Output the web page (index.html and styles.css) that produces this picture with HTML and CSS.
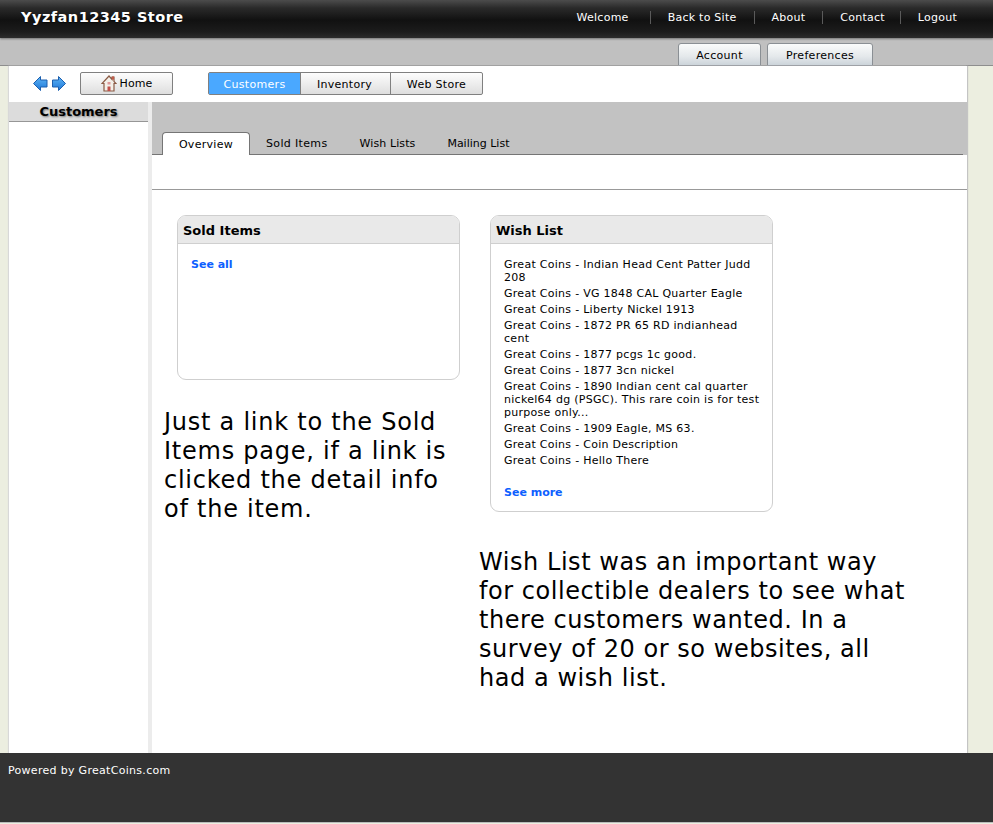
FILE: index.html
```html
<!DOCTYPE html>
<html lang="en">
<head>
<meta charset="utf-8">
<title>Yyzfan12345 Store</title>
<link rel="stylesheet" href="styles.css">
</head>
<body>
<header class="topbar">
  <div class="brand">Yyzfan12345 Store</div>
  <nav class="toplinks">
    <a class="toplink">Welcome</a>
    <a class="toplink">Back to Site</a>
    <a class="toplink">About</a>
    <a class="toplink toplink-contact">Contact</a>
    <a class="toplink">Logout</a>
  </nav>
</header>
<div class="subbar">
  <a class="subtab subtab-account">Account</a>
  <a class="subtab subtab-prefs">Preferences</a>
</div>
<div class="shell">
  <div class="toolbar">
    <div class="arrows">
      <svg class="arrow" width="15" height="15" viewBox="0 0 15 15"><defs><linearGradient id="arrowfill" x1="0" y1="0" x2="0" y2="1"><stop offset="0" stop-color="#5db4f5"/><stop offset="1" stop-color="#1f78d8"/></linearGradient></defs><path d="M0.5 7.5 7.5 0.5V4H14V11H7.5V14.5Z" fill="url(#arrowfill)" stroke="#1c5fae"/></svg>
      <svg class="arrow" width="14" height="15" viewBox="0 0 14 15"><path d="M13.5 7.5 6.5 0.5V4H0.5V11H6.5V14.5Z" fill="url(#arrowfill)" stroke="#1c5fae"/></svg>
    </div>
    <button class="home-btn">
      <svg width="16" height="17" viewBox="0 0 16 17"><path d="M8 1 1 8.5H3V16H13V8.500H15L13 6.500V2H11V4.500Z" fill="#f3efe8" stroke="#8a5a44" stroke-width="1.200"/><rect x="11" y="1.500" width="2" height="3" fill="#c25a4a"/><rect x="6.500" y="7" width="3" height="2.500" fill="#d99"/><rect x="6.500" y="11.500" width="3" height="4.500" fill="#c2504a"/></svg>
      <span>Home</span>
    </button>
    <div class="segments">
      <a class="segment segment-active">Customers</a>
      <a class="segment segment-inv">Inventory</a>
      <a class="segment segment-web">Web Store</a>
    </div>
  </div>
  <div class="columns">
    <aside class="sidebar">
      <h2 class="sidebar-title">Customers</h2>
    </aside>
    <main class="content">
      <div class="tabband">
        <div class="tabrow">
          <a class="tab tab-active">Overview</a>
          <a class="tab tab-sold">Sold Items</a>
          <a class="tab tab-wish">Wish Lists</a>
          <a class="tab tab-mail">Mailing List</a>
        </div>
      </div>
      <div class="rule-row"></div>
      <div class="panels">
        <section class="panel-col panel-col-left">
          <div class="card card-sold">
            <h3 class="card-title">Sold Items</h3>
            <div class="card-body"><a class="more">See all</a></div>
          </div>
          <p class="note note-left">Just a link to the Sold Items page, if a link is clicked the detail info of the item.</p>
        </section>
        <section class="panel-col panel-col-right">
          <div class="card">
            <h3 class="card-title">Wish List</h3>
            <div class="card-body card-body-list">
              <ul class="items">
                <li>Great Coins - Indian Head Cent Patter Judd 208</li>
                <li>Great Coins - VG 1848 CAL Quarter Eagle</li>
                <li>Great Coins - Liberty Nickel 1913</li>
                <li>Great Coins - 1872 PR 65 RD indianhead cent</li>
                <li>Great Coins - 1877 pcgs 1c good.</li>
                <li>Great Coins - 1877 3cn nickel</li>
                <li>Great Coins - 1890 Indian cent cal quarter nickel64 dg (PSGC). This rare coin is for test purpose only...</li>
                <li>Great Coins - 1909 Eagle, MS 63.</li>
                <li>Great Coins - Coin Description</li>
                <li>Great Coins - Hello There</li>
              </ul>
              <a class="more">See more</a>
            </div>
          </div>
          <p class="note note-right">Wish List was an important way for collectible dealers to see what there customers wanted. In a survey of 20 or so websites, all had a wish list.</p>
        </section>
      </div>
    </main>
  </div>
</div>
<footer class="footer">Powered by GreatCoins.com</footer>
</body>
</html>
```

FILE: styles.css
```css
* { box-sizing: border-box; }
html, body { height: 100%; }
body {
  margin: 0;
  height: 824px;
  overflow: hidden;
  background: #eceee0;
  font-family: "DejaVu Sans", Verdana, sans-serif;
  font-size: 11px;
  color: #000;
  display: flex;
  flex-direction: column;
}
.topbar {
  height: 38px;
  flex: none;
  display: flex;
  justify-content: space-between;
  align-items: center;
  background: linear-gradient(#4c4c4c 0, #2a2a2a 8px, #111 20px, #1c1c1c 32px, #2c2c2c 38px);
  box-shadow: 0 1px 2px rgba(0,0,0,.4);
  position: relative;
  z-index: 1;
}
.brand {
  margin-left: 21px;
  margin-top: -5px;
  font-size: 14.500px;
  letter-spacing: .47px;
  font-weight: bold;
  color: #fff;
  text-shadow: 0 1px 1px rgba(0,0,0,.6);
}
.toplinks { display: flex; margin-right: 19px; margin-top: -4px; }
.toplink {
  color: #fff;
  font-size: 11px;
  letter-spacing: .25px;
  line-height: 13px;
  padding: 0 17px;
  border-left: 1px solid #5a5a5a;
}
.toplink:first-child { border-left: 0; padding-right: 21px; }
.toplink-contact { padding-right: 15px; }
.subbar {
  height: 28px;
  flex: none;
  background: #c0c0c0;
  border-bottom: 1px solid #8e8e8e;
  display: flex;
  align-items: flex-end;
  padding-left: 678px;
  gap: 6px;
}
.subtab {
  height: 23px;
  margin-bottom: -1px;
  border: 1px solid #8a8f94;
  border-radius: 3px 3px 0 0;
  background: linear-gradient(#fafbfb, #e4e8eb 60%, #ccd4da);
  text-align: center;
  line-height: 24px;
  font-size: 11px;
  letter-spacing: .3px;
}
.subtab-account { width: 83px; }
.subtab-prefs { width: 106px; }
.shell {
  flex: none;
  margin-left: 9px;
  width: 958px;
  height: 687px;
  background: #fff;
  box-shadow: 1px 0 1px #c4c4c4, -1px 0 1px #d8d8d8;
  display: flex;
  flex-direction: column;
}
.toolbar {
  height: 36px;
  flex: none;
  display: flex;
  align-items: center;
  padding-bottom: 1px;
}
.arrows { display: flex; gap: 4px; margin-left: 24px; width: 47px; }
.arrow { display: block; }
.home-btn {
  width: 93px;
  height: 23px;
  padding: 0;
  border: 1px solid #808080;
  border-radius: 2px;
  background: linear-gradient(#fdfdfd, #dedede);
  display: flex;
  align-items: center;
  justify-content: center;
  gap: 3px;
  font: 11px "DejaVu Sans", Verdana, sans-serif;
  letter-spacing: .1px;
  color: #000;
}
.segments {
  display: flex;
  margin-left: 35px;
  height: 23px;
  border: 1px solid #808080;
  border-radius: 2px;
  background: linear-gradient(#fdfdfd, #dedede);
}
.segment { line-height: 24px; text-align: center; font-size: 11px; letter-spacing: .3px; }
.segment-active { width: 91px; background: #4aa8ff; color: #fff; }
.segment-inv { width: 90px; padding-right: 2px; border-left: 1px solid #808080; }
.segment-web { width: 92px; border-left: 1px solid #808080; }
.columns { flex: 1; display: flex; min-height: 0; }
.sidebar { width: 139px; flex: none; }
.sidebar-title {
  margin: 0;
  height: 20px;
  background: #dcdcdc;
  border-bottom: 1px solid #969696;
  text-align: center;
  font-size: 13px;
  line-height: 19px;
  font-weight: bold;
  text-shadow: 1px 1px 2px rgba(0,0,0,.45);
}
.content {
  flex: 1;
  min-width: 0;
  border-left: 4px solid #ececec;
  display: flex;
  flex-direction: column;
}
.tabband {
  height: 53px;
  flex: none;
  background: #c2c2c2;
  padding-right: 4px;
  display: flex;
}
.tabrow {
  flex: 1;
  border-bottom: 1px solid #757575;
  display: flex;
  align-items: flex-end;
  padding-left: 10px;
}
.tab { font-size: 11px; line-height: 13px; padding-bottom: 4px; }
.tab-active {
  width: 88px;
  height: 23px;
  margin-bottom: -1px;
  background: #fff;
  border: 1px solid #757575;
  border-bottom: 0;
  border-radius: 4px 4px 0 0;
  text-align: center;
  line-height: 24px;
  letter-spacing: .3px;
  padding: 0;
}
.tab-sold { margin-left: 16px; letter-spacing: .35px; }
.tab-wish { margin-left: 32px; letter-spacing: .1px; }
.tab-mail { margin-left: 32px; }
.rule-row { height: 35px; flex: none; border-bottom: 1px solid #999; }
.panels { display: flex; flex: 1; padding-left: 25px; padding-top: 25px; }
.panel-col { width: 283px; flex: none; }
.panel-col-right { margin-left: 30px; }
.card {
  border: 1px solid #cfcfcf;
  border-radius: 9px;
  overflow: hidden;
}
.card-sold { height: 165px; }
.card-title {
  margin: 0;
  height: 28px;
  padding-left: 5px;
  background: #e9e9e9;
  border-bottom: 1px solid #cfcfcf;
  font-size: 13px;
  line-height: 30px;
  font-weight: bold;
}
.card-body { padding: 14px 13px 13px; }
.card-body-list { height: 267px; }
.more { color: #0d5fff; font-weight: bold; line-height: 13px; display: block; }
.items { list-style: none; margin: 0 -5px 19px 0; padding: 0; letter-spacing: .28px; }
.items li { line-height: 13px; margin-bottom: 3px; }
.note { margin: 0; font-size: 24px; line-height: 29px; }
.note-left { margin: 28px 0 0 -13px; width: 290px; letter-spacing: .75px; }
.note-right { margin: 36px 0 0 -11px; width: 430px; letter-spacing: .55px; }
.footer {
  flex: none;
  height: 70px;
  background: #333;
  border-bottom: 1px solid #bbb;
  color: #fff;
  padding: 11px 8px;
  line-height: 14px;
  letter-spacing: .3px;
  position: relative;
}
```
